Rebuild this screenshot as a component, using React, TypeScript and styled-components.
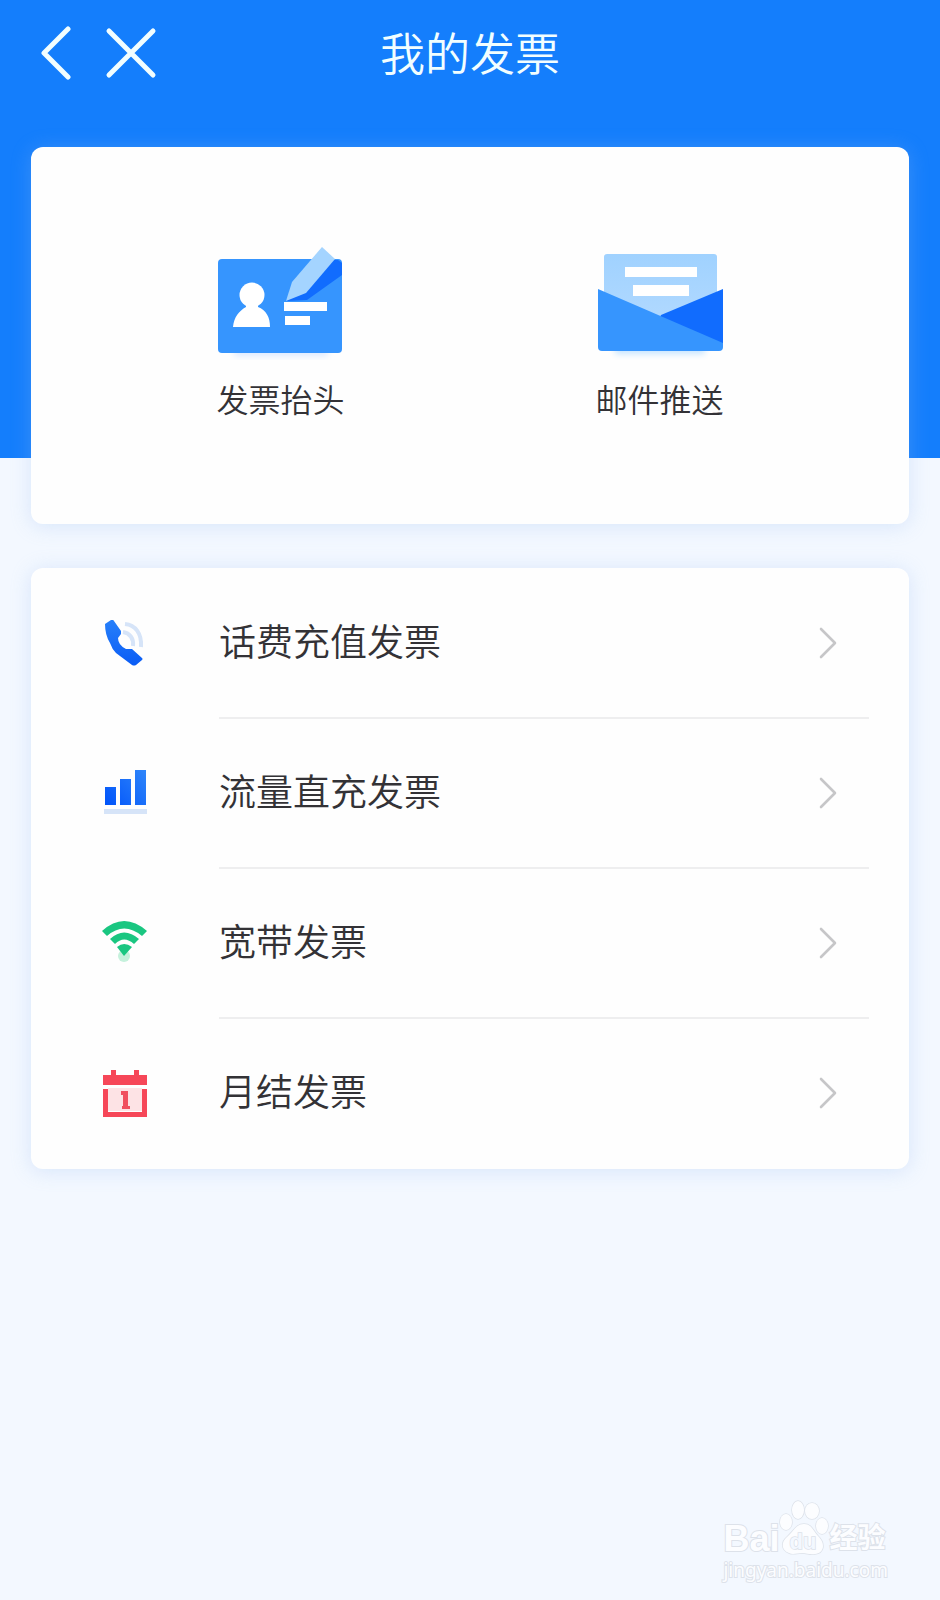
import React from "react";
import styled, { createGlobalStyle } from "styled-components";

const GlobalStyle = createGlobalStyle`
  * { box-sizing: border-box; }
  body {
    margin: 0;
    background: #f3f8ff;
    color: #333236;
    font-family: "Noto Sans CJK SC", "Noto Sans", sans-serif;
    font-weight: 350;
  }
  button {
    border: 0;
    padding: 0;
    background: none;
    color: inherit;
    font: inherit;
    cursor: pointer;
  }
  svg { display: block; }
`;

const Page = styled.div`
  display: flex;
  flex-direction: column;
  min-height: 100vh;
`;

const Hero = styled.header`
  padding-bottom: 354px;
  background: #147efc;
`;

const TopBar = styled.div`
  display: grid;
  grid-template-columns: 1fr auto 1fr;
  align-items: center;
  height: 104px;
  padding: 0 32px;
  color: #f2feff;
`;

const NavButtons = styled.nav`
  display: flex;
  gap: 15px;
`;

const NavButton = styled.button`
  width: 56px;
  height: 56px;
`;

const Title = styled.h1`
  margin: 0;
  font-size: 45px;
  font-weight: 350;
  line-height: 64px;
`;

const Content = styled.main`
  display: flex;
  flex-direction: column;
  gap: 44px;
  margin: -311px 31px 0;
`;

const Card = styled.section`
  border-radius: 12px;
  background: #fefefe;
  box-shadow: 0 2px 20px rgba(150, 185, 240, 0.3);
`;

const Shortcuts = styled(Card)`
  display: grid;
  grid-template-columns: 1fr 1fr;
  height: 377px;
  padding: 92px 60px 0;
`;

const Shortcut = styled.button`
  display: flex;
  flex-direction: column;
  align-items: center;
  align-self: start;
  gap: 14px;
`;

const ShortcutLabel = styled.span`
  font-size: 32px;
  line-height: 48px;
`;

const List = styled.ul`
  margin: 0;
  padding: 1px 0 0;
  list-style: none;
`;

const Row = styled.a`
  display: grid;
  grid-template-columns: 48px 1fr;
  column-gap: 70px;
  align-items: center;
  height: 150px;
  padding: 0 40px 0 70px;
  color: inherit;
  text-decoration: none;
`;

const RowBody = styled.span<{ $divided: boolean }>`
  display: flex;
  align-items: center;
  justify-content: space-between;
  height: 100%;
  padding-right: 32px;
  border-bottom: 2px solid ${(p) => (p.$divided ? "#eeeeef" : "transparent")};
`;

const RowLabel = styled.span`
  padding-bottom: 6px;
  font-size: 37px;
  line-height: 56px;
`;

const Footer = styled.footer`
  display: flex;
  justify-content: flex-end;
  margin-top: auto;
  padding: 0 52px 20px 0;
`;

const Watermark = styled.div`
  display: flex;
  flex-direction: column;
  color: #fcfdff;
  font-family: "Liberation Sans", "Noto Sans CJK SC", sans-serif;
  paint-order: stroke fill;
  -webkit-text-stroke: 2px #dde2ea;
`;

const Brand = styled.div`
  display: flex;
  align-items: flex-end;
  font-size: 36px;
  font-weight: 700;
  line-height: 42px;
`;

const BrandCjk = styled.span`
  font-size: 28px;
`;

const Site = styled.div`
  font-family: "Noto Sans", sans-serif;
  font-size: 19px;
  font-weight: 400;
  line-height: 20px;
`;

const BackIcon = () => (
  <svg width="56" height="56" viewBox="0 0 56 56" fill="none" stroke="currentColor" strokeWidth="5" strokeLinecap="round" strokeLinejoin="round" aria-hidden="true">
    <path d="M36 5 12 29l24 24" />
  </svg>
);

const CloseIcon = () => (
  <svg width="56" height="56" viewBox="0 0 56 56" fill="none" stroke="currentColor" strokeWidth="5" strokeLinecap="round" aria-hidden="true">
    <path d="M6 7 50 51M50 7 6 51" />
  </svg>
);

const TitleCardIcon = () => (
  <svg width="144" height="121" viewBox="0 0 144 121" aria-hidden="true">
    <defs>
      <filter id="cardGlow" x="-20%" y="-50%" width="140%" height="220%">
        <feGaussianBlur stdDeviation="3" />
      </filter>
    </defs>
    <rect x="25" y="108" width="94" height="9" fill="#dbe9ff" filter="url(#cardGlow)" />
    <rect x="9" y="20" width="124" height="94" rx="4" fill="#3695fe" />
    <circle cx="43" cy="56" r="12.5" fill="#fff" />
    <path d="M24 88c1-10 6-16 13-20v-4h12v4c8 3 12 10 12 20z" fill="#fff" />
    <path d="M77 62 98 61 133 36V24l-4-3h-6L80 57z" fill="#116cfe" />
    <path d="M77 62 83 43 113 8 126 20 97 54z" fill="#a4d4ff" />
    <path d="M75 63h43v9H75zM76 77h25v9H76z" fill="#fff" />
  </svg>
);

const MailIcon = () => (
  <svg width="144" height="121" viewBox="0 0 144 121" aria-hidden="true">
    <defs>
      <linearGradient id="paper" x1="0" y1="0" x2="0" y2="1">
        <stop offset="0" stopColor="#a0d2ff" />
        <stop offset="1" stopColor="#b4daff" />
      </linearGradient>
      <filter id="mailGlow" x="-20%" y="-50%" width="140%" height="220%">
        <feGaussianBlur stdDeviation="3" />
      </filter>
    </defs>
    <rect x="27" y="105" width="90" height="10" fill="#c5e4ff" filter="url(#mailGlow)" />
    <rect x="16" y="15" width="113" height="80" rx="3" fill="url(#paper)" />
    <path d="M37 28h72v10H37zM45 46h56v11H45z" fill="#fff" />
    <path d="M73 76 135 50v56L67 90z" fill="#116cfe" />
    <path d="M10 50 135 104v4q0 4-4 4H14q-4 0-4-4z" fill="#3695fe" />
  </svg>
);

const PhoneIcon = () => (
  <svg width="48" height="48" viewBox="0 0 48 48" aria-hidden="true">
    <defs>
      <linearGradient id="handset" x1="0" y1="1" x2="0" y2="0">
        <stop offset="0" stopColor="#0a5cf5" />
        <stop offset="1" stopColor="#2780fa" />
      </linearGradient>
    </defs>
    <path d="M24 4c10 1 17 9 16 23M22 12c7 1 11 7 10 14" fill="none" stroke="#d6e4f8" strokeWidth="4" />
    <path d="M4 4 10 0q2-1 3 1l7 10v3l-3 4q0 7 8 11h6l10 9q1 1 0 2l-6 5q-2 1-4 0L15 33Q11 29 9 23 4 15 4 4z" fill="url(#handset)" />
  </svg>
);

const BarsIcon = () => (
  <svg width="48" height="48" viewBox="0 0 48 48" aria-hidden="true">
    <defs>
      <linearGradient id="bars" gradientUnits="userSpaceOnUse" x1="4" y1="35" x2="44" y2="0">
        <stop offset="0" stopColor="#0053fa" />
        <stop offset="1" stopColor="#2e85fa" />
      </linearGradient>
    </defs>
    <path d="M4 17h11v18H4zM19 9h11v26H19zM34 0h11v35H34z" fill="url(#bars)" />
    <path d="M3 39h43v5H3z" fill="#d6e4f8" />
  </svg>
);

const WifiIcon = () => (
  <svg width="48" height="48" viewBox="0 0 48 48" aria-hidden="true">
    <circle cx="23" cy="36" r="6" fill="#c5f1dc" />
    <g fill="#1ac681">
      <path d="M1 11Q23-9 46 11L41 16Q23 1 6 16z" />
      <path d="M9 19Q23 6 38 19L33 24Q23 15 14 24z" />
      <path d="M16 27Q23 21 31 27L23 36z" />
    </g>
  </svg>
);

const CalendarIcon = () => (
  <svg width="48" height="48" viewBox="0 0 48 48" aria-hidden="true">
    <path d="M7 18h34v23H7z" fill="#fde3e5" />
    <path d="M2 5h8V0h5v5h18V0h5v5h8v10H2zM2 19h5v23h34V19h5v28H2z" fill="#f64758" />
    <path d="M20 21h7v15h2v3h-8v-3h1V25h-2z" fill="#f0505f" />
  </svg>
);

const Chevron = () => (
  <svg width="18" height="32" viewBox="0 0 18 32" fill="none" stroke="#c6c6c8" strokeWidth="2.6" strokeLinecap="round" strokeLinejoin="round" aria-hidden="true">
    <path d="M2 2 16 16 2 30" />
  </svg>
);

const Paw = () => (
  <svg width="50" height="60" viewBox="1 0 50 60" fill="#fcfdff" stroke="#dde2ea" strokeWidth="1.5" role="img" aria-label="du">
    <ellipse cx="8" cy="22" rx="6" ry="8" />
    <ellipse cx="20" cy="10" rx="6" ry="9" />
    <ellipse cx="34" cy="11" rx="7" ry="8" />
    <ellipse cx="44" cy="26" rx="6" ry="8" />
    <path d="M26 24c8 0 9 7 14 12 8 8 6 17-3 18-5 1-8-1-13-1s-9 2-13 0C3 50 3 42 9 37c7-6 9-13 17-13z" />
    <text x="25" y="49" textAnchor="middle" fontSize="22" fontWeight="700" fill="#f3f8ff">du</text>
  </svg>
);

const shortcuts = [
  { label: "发票抬头", Icon: TitleCardIcon },
  { label: "邮件推送", Icon: MailIcon },
];

const invoices = [
  { id: "phone", label: "话费充值发票", Icon: PhoneIcon },
  { id: "data", label: "流量直充发票", Icon: BarsIcon },
  { id: "broadband", label: "宽带发票", Icon: WifiIcon },
  { id: "monthly", label: "月结发票", Icon: CalendarIcon },
];

export default function App() {
  return (
    <Page>
      <GlobalStyle />
      <Hero>
        <TopBar>
          <NavButtons>
            <NavButton type="button" aria-label="返回"><BackIcon /></NavButton>
            <NavButton type="button" aria-label="关闭"><CloseIcon /></NavButton>
          </NavButtons>
          <Title>我的发票</Title>
        </TopBar>
      </Hero>
      <Content>
        <Shortcuts>
          {shortcuts.map(({ label, Icon }) => (
            <Shortcut key={label} type="button">
              <Icon />
              <ShortcutLabel>{label}</ShortcutLabel>
            </Shortcut>
          ))}
        </Shortcuts>
        <Card>
          <List>
            {invoices.map(({ id, label, Icon }, i) => (
              <li key={id}>
                <Row href={`#${id}`}>
                  <Icon />
                  <RowBody $divided={i < invoices.length - 1}>
                    <RowLabel>{label}</RowLabel>
                    <Chevron />
                  </RowBody>
                </Row>
              </li>
            ))}
          </List>
        </Card>
      </Content>
      <Footer>
        <Watermark>
          <Brand>
            Bai
            <Paw />
            <BrandCjk>经验</BrandCjk>
          </Brand>
          <Site>jingyan.baidu.com</Site>
        </Watermark>
      </Footer>
    </Page>
  );
}
